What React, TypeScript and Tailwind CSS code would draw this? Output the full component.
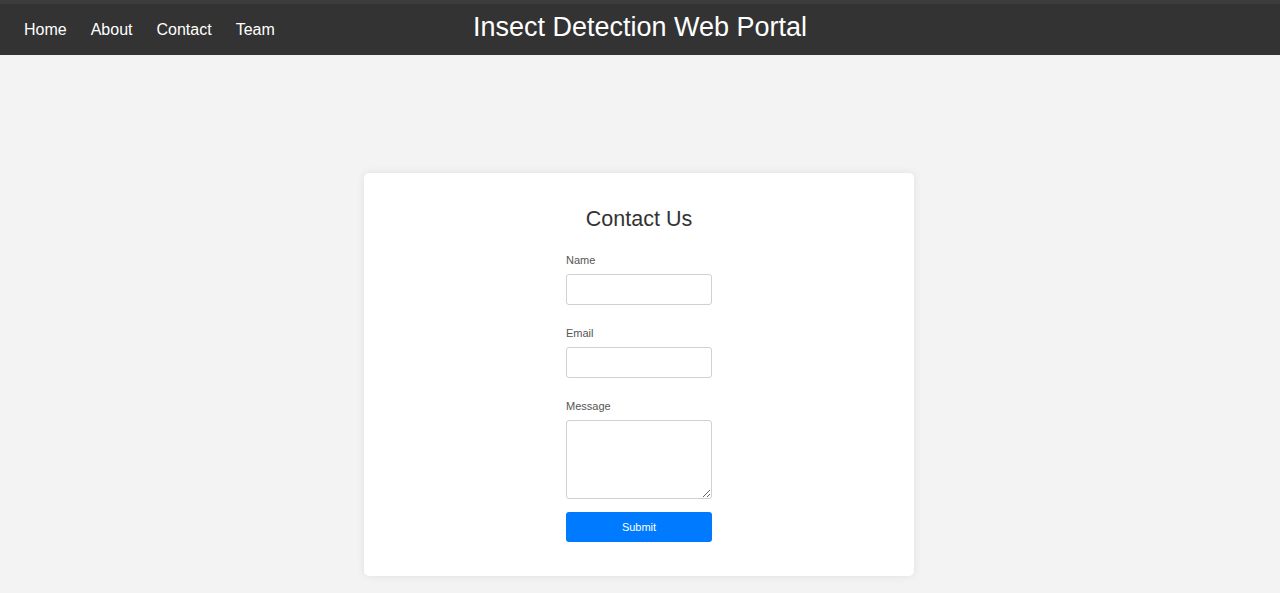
const navLinks = ["Home", "About", "Contact", "Team"];

function Field({ label, multiline }: { label: string; multiline?: boolean }) {
  return (
    <div className="flex flex-col">
      <label className="mb-[7px] text-[11px] leading-[14px] text-[#555]">{label}</label>
      {multiline ? (
        <textarea className="h-[79px] w-[146px] rounded-[3px] border border-[#d0d0d0] bg-white" />
      ) : (
        <input
          type="text"
          className="h-[31px] w-[146px] rounded-[3px] border border-[#d0d0d0] bg-white"
        />
      )}
    </div>
  );
}

export default function App() {
  return (
    <div className="min-h-[593px] bg-[#f3f3f3] font-['Liberation_Sans',Arial,sans-serif]">
      <header className="relative flex h-[55px] items-center border-t-4 border-[#3c3c3c] bg-[#333] px-3">
        <nav className="flex">
          {navLinks.map((link) => (
            <a key={link} href="#" className="px-[12px] text-[16px] text-white">
              {link}
            </a>
          ))}
        </nav>
        <h1 className="absolute left-1/2 top-[5px] -translate-x-1/2 text-[27px] leading-[36px] text-white">
          Insect Detection Web Portal
        </h1>
      </header>

      <main className="flex justify-center pt-[118px] pr-[2px] pb-[17px]">
        <div className="flex w-[550px] flex-col items-center rounded-[5px] bg-white pt-[33px] pb-[34px] shadow-[0_0_8px_rgba(0,0,0,0.08)]">
          <h2 className="text-[21.5px] leading-[26px] text-[#333]">Contact Us</h2>
          <form className="mt-[21px] flex flex-col gap-[21px]">
            <Field label="Name" />
            <Field label="Email" />
            <div className="flex flex-col">
              <Field label="Message" multiline />
              <button
                type="button"
                className="mt-[13px] h-[30px] w-[146px] rounded-[3px] bg-[#007bff] text-[11px] text-white"
              >
                Submit
              </button>
            </div>
          </form>
        </div>
      </main>
    </div>
  );
}
